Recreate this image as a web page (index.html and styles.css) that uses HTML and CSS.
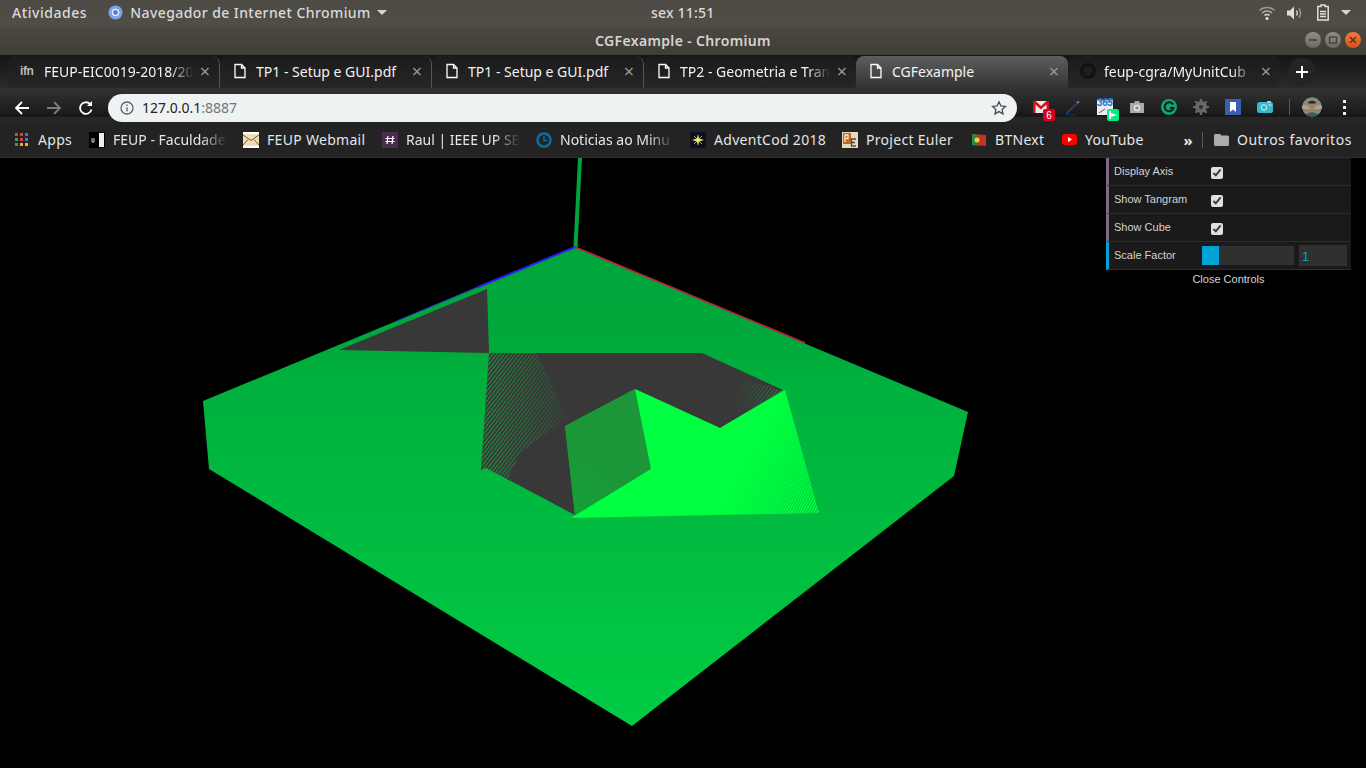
FILE: index.html
```html
<!DOCTYPE html>
<html lang="pt">
<head>
  <meta charset="UTF-8" />
  <title>CGFexample - Chromium</title>
  <link rel="stylesheet" href="styles.css">
</head>
<body>

  <div class="topbar">
    <span class="top-item activities">Atividades</span>
    <span class="top-item app">
      <svg class="chromium-icon" width="15" height="15" viewBox="0 0 16 16"><circle cx="8" cy="8" r="7.5" fill="#7da2e8"/><circle cx="8" cy="8" r="4" fill="#e8eefb"/><circle cx="8" cy="8" r="2.6" fill="#4a7fe0"/></svg>
      Navegador de Internet Chromium
      <i class="caret"></i>
    </span>
    <span class="top-item clock">sex 11:51</span>
    <span class="tray">
      <svg width="18" height="16" viewBox="0 0 18 16" fill="none" stroke="#d8d6d0" stroke-width="1.5"><path d="M1.5 5.5c4-4 11-4 15 0" opacity=".55"/><path d="M4 8c2.700-2.600 7.300-2.600 10 0" opacity=".7"/><path d="M6.500 10.500c1.300-1.200 3.700-1.200 5 0"/><circle cx="9" cy="13.500" r="1.500" fill="#e8e6e0" stroke="none"/></svg>
      <svg width="18" height="16" viewBox="0 0 18 16" fill="none" stroke="#d8d6d0" stroke-width="1.300"><path d="M1 5.500h3l4-4v13l-4-4H1z" fill="#e0ded8" stroke="none"/><path d="M10.500 5.500c1 1.500 1 3.500 0 5"/><path d="M13 3.500c2 2.500 2 6.500 0 9" opacity=".6"/></svg>
      <svg class="battery" width="14" height="17" viewBox="0 0 14 17" fill="none" stroke="#e0ded8" stroke-width="1.500"><path d="M5 1h4v1.500h3.200V16H1.800V2.500H5z"/><path d="M4 7.500h6M4 10h6M4 12.500h6" stroke-width="1.300"/></svg>
      <i class="caret"></i>
    </span>
  </div>

  <div class="titlebar">
    <span class="title">CGFexample - Chromium</span>
    <span class="win-buttons">
      <span class="win-btn"><svg width="16" height="16" viewBox="0 0 16 16"><path d="M4 8h8" stroke="#3f3d39" stroke-width="1.500"/></svg></span>
      <span class="win-btn"><svg width="16" height="16" viewBox="0 0 16 16"><rect x="4.500" y="5" width="7" height="6" fill="none" stroke="#3f3d39" stroke-width="1.200"/></svg></span>
      <span class="win-btn close"><svg width="16" height="16" viewBox="0 0 16 16"><path d="M5 5l6 6M11 5l-6 6" stroke="#5a2a12" stroke-width="1.300"/></svg></span>
    </span>
  </div>

  <div class="tabstrip">
    <div class="tab">
      <span class="favicon lab">ifn</span>
      <span class="tab-title">FEUP-EIC0019-2018/20</span>
      <span class="tab-close">×</span>
    </div>
    <div class="tab">
      <svg class="favicon" width="16" height="16" viewBox="0 0 16 16" fill="none" stroke="#fff" stroke-width="1.300"><path d="M3 1.500h6.500l3.500 3.500v9.500H3zM9.500 1.500V5H13"/></svg>
      <span class="tab-title">TP1 - Setup e GUI.pdf</span>
      <span class="tab-close">×</span>
    </div>
    <div class="tab">
      <svg class="favicon" width="16" height="16" viewBox="0 0 16 16" fill="none" stroke="#fff" stroke-width="1.300"><path d="M3 1.500h6.500l3.500 3.500v9.500H3zM9.500 1.500V5H13"/></svg>
      <span class="tab-title">TP1 - Setup e GUI.pdf</span>
      <span class="tab-close">×</span>
    </div>
    <div class="tab">
      <svg class="favicon" width="16" height="16" viewBox="0 0 16 16" fill="none" stroke="#fff" stroke-width="1.300"><path d="M3 1.500h6.500l3.500 3.500v9.500H3zM9.500 1.500V5H13"/></svg>
      <span class="tab-title">TP2 - Geometria e Tran</span>
      <span class="tab-close">×</span>
    </div>
    <div class="tab active">
      <svg class="favicon" width="16" height="16" viewBox="0 0 16 16" fill="none" stroke="#fff" stroke-width="1.300"><path d="M3 1.500h6.500l3.500 3.500v9.500H3zM9.500 1.500V5H13"/></svg>
      <span class="tab-title">CGFexample</span>
      <span class="tab-close">×</span>
    </div>
    <div class="tab">
      <svg class="favicon" width="16" height="16" viewBox="0 0 16 16"><circle cx="8" cy="8" r="8" fill="#111"/><path d="M4.500 13.500v-1.500c-2 .3-2.300-1-3-1.500M8 14v-2.500c2.500-.3 3.800-1.500 3.800-3.700 0-.9-.3-1.600-.8-2.100.2-.6.100-1.300-.1-1.900-.7 0-1.300.3-1.800.7a6 6 0 0 0-2.200 0c-.5-.4-1.100-.7-1.800-.7-.2.600-.3 1.300-.1 1.900-.5.500-.8 1.200-.8 2.100 0 2.200 1.300 3.400 3.800 3.700" fill="#1d1d1d" stroke="#2a2a2a" stroke-width=".8"/></svg>
      <span class="tab-title">feup-cgra/MyUnitCub</span>
      <span class="tab-close">×</span>
    </div>
    <span class="newtab"><svg width="14" height="14" viewBox="0 0 14 14"><path d="M7 1v12M1 7h12" stroke="#fff" stroke-width="2"/></svg></span>
  </div>

  <div class="toolbar">
    <span class="nav-btn"><svg width="16" height="16" viewBox="0 0 16 16" fill="none" stroke="#fff" stroke-width="1.800"><path d="M15 8H2M8 2L2 8l6 6"/></svg></span>
    <span class="nav-btn off"><svg width="16" height="16" viewBox="0 0 16 16" fill="none" stroke="#7b7b7b" stroke-width="1.800"><path d="M1 8h13M8 2l6 6-6 6"/></svg></span>
    <span class="nav-btn"><svg width="16" height="16" viewBox="0 0 16 16" fill="none" stroke="#fff" stroke-width="1.800"><path d="M13.500 9.500A5.800 5.800 0 1 1 12 4"/><path d="M14 1v5H9" fill="#fff" stroke="none"/></svg></span>
    <div class="urlbar">
      <svg class="info" width="14" height="14" viewBox="0 0 14 14" fill="none" stroke="#5f6368" stroke-width="1.300"><circle cx="7" cy="7" r="6"/><path d="M7 6.200V10.500M7 3.500v1.500"/></svg>
      <span class="url-text"><span class="host">127.0.0.1</span><span class="port">:8887</span></span>
      <svg class="star" width="16" height="16" viewBox="0 0 16 16" fill="none" stroke="#4a4d50" stroke-width="1.300"><path d="M8 1.800l1.900 4.100 4.500.5-3.300 3 .9 4.500L8 11.600l-4 2.300.9-4.500-3.300-3 4.500-.5z"/></svg>
    </div>
    <div class="extensions">
      <span class="ext">
        <svg width="16" height="14" viewBox="0 0 16 14"><rect width="16" height="12" y="1" fill="#e8e8e8"/><path d="M0 1h2.500L8 6l5.500-5H16v12h-2.500V4.500L8 9.500 2.500 4.500V13H0z" fill="#d8101c"/></svg>
        <b class="badge red">6</b>
      </span>
      <span class="ext">
        <svg width="18" height="18" viewBox="0 0 18 18"><path d="M3 13.500L14 3l1.500 1L5 15z" fill="#2c3a58"/><path d="M12.500 4.500L14 3l1.500 1L14 5.500z" fill="#8a94a8"/><path d="M3 13.500L5 15l-3.500 1.500z" fill="#1038c0"/><path d="M2 16.800h11" stroke="#14305c" stroke-width="1.200"/></svg>
      </span>
      <span class="ext">
        <svg width="16" height="16" viewBox="0 0 16 16"><rect width="16" height="16" fill="#e8eef4"/><rect width="16" height="1.500" fill="#2a70c0"/><path d="M2 14l6-4" stroke="#7a8a9a" stroke-width="1.500"/></svg>
        <span class="ext-365">365</span>
        <b class="badge green"><svg width="10" height="8" viewBox="0 0 10 8"><path d="M1 0h2v2l6 2-6 2v2H1z" fill="#fff"/></svg></b>
      </span>
      <span class="ext">
        <svg width="16" height="14" viewBox="0 0 16 14"><path d="M1 3h4l1-2h4l1 2h4v10H1z" fill="#a9a9a9"/><circle cx="8" cy="8" r="3.200" fill="#e6e6e6"/><circle cx="8" cy="8" r="1.800" fill="#8c8c8c"/></svg>
      </span>
      <span class="ext">
        <svg width="16" height="16" viewBox="0 0 16 16"><circle cx="8" cy="8" r="8" fill="#12a36e"/><path d="M12 5.500A4.500 4.500 0 1 0 12.500 9H9" fill="none" stroke="#0d1f18" stroke-width="2"/></svg>
      </span>
      <span class="ext">
        <svg width="16" height="16" viewBox="0 0 16 16"><circle cx="8" cy="8" r="6" fill="#686868"/><path d="M8 0v3M8 13v3M0 8h3M13 8h3M2.300 2.300l2 2M11.700 11.700l2 2M13.700 2.300l-2 2M4.300 11.700l-2 2" stroke="#686868" stroke-width="2.200"/><circle cx="8" cy="8" r="2" fill="#2c2c2c"/></svg>
      </span>
      <span class="ext">
        <svg width="16" height="16" viewBox="0 0 16 16"><rect width="16" height="16" fill="#3b5fb0"/><path d="M5 3h6v10l-3-2.500L5 13z" fill="#fff"/></svg>
      </span>
      <span class="ext">
        <svg width="16" height="12" viewBox="0 0 16 12"><rect y="1" width="16" height="11" rx="2.500" fill="#35b8c8"/><rect x="10" width="4" height="2" fill="#8ad8e0"/><circle cx="7" cy="6.500" r="2.800" fill="none" stroke="#d8f4f8" stroke-width="1"/><path d="M11.500 4h3" stroke="#d8f4f8"/></svg>
      </span>
      <i class="tool-sep"></i>
      <span class="avatar"><svg width="20" height="20" viewBox="0 0 20 20"><circle cx="10" cy="10" r="10" fill="#8a8878"/><path d="M0 8h20v4H0z" fill="#a8a490"/><circle cx="10" cy="8" r="3.800" fill="#a87a60"/><path d="M6 6c1-3 7-3 8 0l-1 .5H7z" fill="#2a2420"/><path d="M3 20c0-6 14-6 14 0z" fill="#3a5868"/></svg></span>
      <span class="ext menu"><i></i><i></i><i></i></span>
    </div>
  </div>

  <div class="bookmarks">
    <span class="bm apps">
      <svg width="13" height="13" viewBox="0 0 13 13"><g fill="#e04030"><rect width="3" height="3"/><rect x="5" width="3" height="3"/><rect x="10" width="3" height="3" fill="#3a78e0"/></g><g fill="#38a050"><rect y="5" width="3" height="3"/><rect x="5" y="5" width="3" height="3" fill="#e04030"/><rect x="10" y="5" width="3" height="3" fill="#3a78e0"/><rect y="10" width="3" height="3"/><rect x="5" y="10" width="3" height="3" fill="#f0b020"/><rect x="10" y="10" width="3" height="3" fill="#f0b020"/></g></svg>
      <span class="bm-name">Apps</span>
    </span>
    <span class="bm">
      <svg width="16" height="16" viewBox="0 0 16 16"><rect width="16" height="16"/><rect x="10" y="1" width="5" height="14" fill="#eee"/><path d="M3 6v4h2V6" fill="none" stroke="#ddd"/></svg>
      <span class="bm-name fade">FEUP - Faculdade</span>
    </span>
    <span class="bm">
      <svg width="16" height="16" viewBox="0 0 16 16"><rect width="16" height="2" fill="#fff"/><rect y="14" width="16" height="2" fill="#fff"/><rect y="2" width="16" height="12" fill="#f0dfb8"/><path d="M0 3l8 5.500L16 3M0 13l5-5.500M16 13l-5-5.500" fill="none" stroke="#7a5a30"/></svg>
      <span class="bm-name">FEUP Webmail</span>
    </span>
    <span class="bm">
      <svg width="16" height="16" viewBox="0 0 16 16"><rect width="16" height="16" fill="#4a2d4e"/><path d="M6 4L5 12M11 4l-1 8M3.500 6.500h9M3.500 9.500h9" stroke="#fff" stroke-width="1.200"/></svg>
      <span class="bm-name fade">Raul | IEEE UP SB</span>
    </span>
    <span class="bm">
      <svg width="16" height="16" viewBox="0 0 16 16" fill="none"><circle cx="8" cy="8" r="6.500" stroke="#0a6ea8" stroke-width="2.500"/><path d="M8 4v4.500h3.500" stroke="#0a6ea8" stroke-width="1.500"/></svg>
      <span class="bm-name fade">Noticias ao Minu</span>
    </span>
    <span class="bm">
      <svg width="16" height="16" viewBox="0 0 16 16"><rect width="16" height="16" fill="#0f0f23"/><path d="M8 2l1.100 4.400L14 8l-4.900 1.600L8 14 6.900 9.600 2 8l4.900-1.600z" fill="#e8e860"/><path d="M4 4l8 8M12 4l-8 8" stroke="#e8e860" stroke-width=".7"/></svg>
      <span class="bm-name">AdventCod 2018</span>
    </span>
    <span class="bm">
      <svg width="16" height="16" viewBox="0 0 16 16"><rect width="16" height="16" fill="#e8d8c0"/><rect x="1" y="1" width="8" height="11" fill="#c86818"/><path d="M3 10V3h3v3.500H3" fill="none" stroke="#f4e8d8" stroke-width="1.300"/><path d="M14 7H9.500v7H14M9.500 10.500H13" fill="none" stroke="#4a4a4a" stroke-width="1.300"/></svg>
      <span class="bm-name">Project Euler</span>
    </span>
    <span class="bm">
      <svg width="16" height="16" viewBox="0 0 16 16"><path d="M1 2l14 1v11L1 13z" fill="#c8302c"/><path d="M1 2l5 .4v11L1 13z" fill="#2a8a3c"/><circle cx="6" cy="8" r="2.500" fill="#e8d040"/></svg>
      <span class="bm-name">BTNext</span>
    </span>
    <span class="bm">
      <svg width="15" height="11" viewBox="0 0 15 11"><rect width="15" height="11" rx="3" fill="#f00"/><path d="M6 3l4 2.500L6 8z" fill="#fff"/></svg>
      <span class="bm-name">YouTube</span>
    </span>
    <span class="bm-more">»</span>
    <i class="bm-sep"></i>
    <span class="bm">
      <svg width="15" height="12" viewBox="0 0 15 12"><path d="M0 1.500C0 .700.700 0 1.500 0H6l1.500 1.500h6c.800 0 1.500.700 1.500 1.500v7.500c0 .800-.700 1.500-1.500 1.500h-12C.700 12 0 11.300 0 10.500z" fill="#a9adb0"/></svg>
      <span class="bm-name outros">Outros favoritos</span>
    </span>
  </div>

  <div class="scene">
    <svg class="webgl" width="1366" height="610" viewBox="0 158 1366 610">
      <defs>
        <linearGradient id="floor" gradientUnits="userSpaceOnUse" x1="0" y1="247" x2="0" y2="726">
          <stop offset="0" stop-color="#00a53b"/>
          <stop offset=".2" stop-color="#00a93c"/>
          <stop offset=".27" stop-color="#00b03d"/>
          <stop offset=".6" stop-color="#00bc40"/>
          <stop offset="1" stop-color="#00cc44"/>
        </linearGradient>
        <pattern id="stripes" patternUnits="userSpaceOnUse" width="3" height="3" patternTransform="rotate(-52)">
          <rect width="3" height="1" fill="#1c9a3c"/>
        </pattern>
        <pattern id="stripes-light" patternUnits="userSpaceOnUse" width="2.500" height="2.500" patternTransform="rotate(-62)">
          <rect width="2.500" height="1" fill="#00bc3e"/>
        </pattern>
        <linearGradient id="fade-left" gradientUnits="userSpaceOnUse" x1="485" y1="0" x2="585" y2="0">
          <stop offset="0" stop-color="#fff"/>
          <stop offset="1" stop-color="#000"/>
        </linearGradient>
        <linearGradient id="fade-right" gradientUnits="userSpaceOnUse" x1="782" y1="0" x2="735" y2="0">
          <stop offset="0" stop-color="#ccc"/>
          <stop offset="1" stop-color="#000"/>
        </linearGradient>
        <linearGradient id="fade-corner" gradientUnits="userSpaceOnUse" x1="819" y1="513" x2="741" y2="471">
          <stop offset="0" stop-color="#fff"/>
          <stop offset="1" stop-color="#000"/>
        </linearGradient>
        <linearGradient id="fade-cube" gradientUnits="userSpaceOnUse" x1="570" y1="510" x2="605" y2="460">
          <stop offset="0" stop-color="#aaa"/>
          <stop offset="1" stop-color="#000"/>
        </linearGradient>
        <mask id="mask-left" maskUnits="userSpaceOnUse" x="470" y="340" width="120" height="150"><rect x="470" y="340" width="120" height="150" fill="url(#fade-left)"/></mask>
        <mask id="mask-right" maskUnits="userSpaceOnUse" x="730" y="370" width="60" height="50"><rect x="730" y="370" width="60" height="50" fill="url(#fade-right)"/></mask>
        <mask id="mask-corner" maskUnits="userSpaceOnUse" x="700" y="380" width="130" height="140"><rect x="700" y="380" width="130" height="140" fill="url(#fade-corner)"/></mask>
        <mask id="mask-cube" maskUnits="userSpaceOnUse" x="560" y="420" width="95" height="100"><rect x="560" y="420" width="95" height="100" fill="url(#fade-cube)"/></mask>
      </defs>

      <polygon points="575,247 968,412 954,476 632,726 209,469 203,401" fill="url(#floor)"/>
      <polygon points="339,350 487,289 489,353" fill="#383838"/>
      <polygon points="489,353 702,353 783,390 720,428 635,389 565,426 575,515 486,468 481,470" fill="#383838"/>
      <polygon points="489,353 537,353 567,417 520,453 507,480 486,468 481,470" fill="url(#stripes)" mask="url(#mask-left)"/>
      <polygon points="733,377 782,391 735,417" fill="url(#stripes)" mask="url(#mask-right)"/>
      <polygon points="635,389 565,426 575,515 651,469" fill="#1c9638"/>
      <polygon points="635,389 565,426 575,515 651,469" fill="url(#stripes-light)" mask="url(#mask-cube)"/>
      <polygon points="635,389 651,469 571,518 819,513 785,390 720,428" fill="#00ff40"/>
      <polygon points="819,513 785,390 717,515" fill="url(#stripes-light)" mask="url(#mask-corner)"/>

      <line x1="575.500" y1="247" x2="580" y2="158" stroke="#00a53b" stroke-width="4"/>
      <line x1="575" y1="247" x2="805" y2="343" stroke="#b02a3c" stroke-width="1.800"/>
      <line x1="575" y1="247" x2="478" y2="287" stroke="#2a1cf0" stroke-width="2"/>
      <line x1="478" y1="287" x2="397" y2="321" stroke="#2048c0" stroke-width="1.200"/>
    </svg>

    <div class="gui">
      <div class="gui-row">
        <label class="gui-label">Display Axis</label>
        <input class="gui-check" type="checkbox" checked />
      </div>
      <div class="gui-row">
        <label class="gui-label">Show Tangram</label>
        <input class="gui-check" type="checkbox" checked />
      </div>
      <div class="gui-row">
        <label class="gui-label">Show Cube</label>
        <input class="gui-check" type="checkbox" checked />
      </div>
      <div class="gui-row number">
        <label class="gui-label">Scale Factor</label>
        <div class="gui-slider"><div class="gui-fill"></div></div>
        <input class="gui-value" type="text" value="1" />
      </div>
      <div class="gui-close">Close Controls</div>
    </div>
  </div>

</body>
</html>
```

FILE: styles.css
```css
* {
  box-sizing: border-box;
}
html, body {
  height: 100%;
}
body {
  margin: 0;
  width: 1366px;
  height: 768px;
  overflow: hidden;
  display: flex;
  flex-direction: column;
  background: #000;
  font-family: "Noto Sans", sans-serif;
}

/* ubuntu top bar */
.topbar {
  height: 27px;
  flex: none;
  position: relative;
  display: flex;
  align-items: center;
  padding: 0 0 2px 12px;
  background: linear-gradient(to bottom, #4d4a44, #514e48);
  color: #d8dadb;
  font-size: 14px;
  font-weight: 500;
  letter-spacing: .55px;
}
.top-item {
  display: flex;
  align-items: center;
  white-space: nowrap;
}
.app {
  margin-left: 21px;
  gap: 7px;
  letter-spacing: .42px;
}
.clock {
  position: absolute;
  left: 651px;
  top: 3px;
  letter-spacing: .2px;
}
.caret {
  display: inline-block;
  width: 0;
  height: 0;
  border: 5px solid transparent;
  border-top: 5px solid #d8d6d0;
  border-bottom: 0;
  margin-left: -1px;
}
.tray {
  margin-left: auto;
  padding-right: 15px;
  display: flex;
  align-items: center;
  gap: 9px;
}
.tray svg:first-child {
  margin-right: 1px;
}
.tray .caret {
  margin-left: 2px;
}
.battery {
  margin-left: 3px;
}

.titlebar {
  height: 28px;
  flex: none;
  position: relative;
  display: flex;
  align-items: center;
  justify-content: center;
  padding-bottom: 2px;
  background: linear-gradient(to bottom, #4b4842, #403d38);
  color: #d6d4ce;
  font-size: 14px;
  font-weight: 600;
  letter-spacing: .35px;
}
.win-buttons {
  position: absolute;
  right: 5px;
  top: 5px;
  display: flex;
  gap: 4px;
}
.win-btn {
  width: 16px;
  height: 16px;
  border-radius: 50%;
  background: linear-gradient(to bottom, #8f8c85, #6c6963);
  display: block;
}
.win-btn svg {
  display: block;
}
.win-btn.close {
  background: linear-gradient(to bottom, #f2793f, #d8501c);
}

/* chromium */
.tabstrip {
  height: 33px;
  flex: none;
  display: flex;
  align-items: stretch;
  padding: 1px 0 0 8px;
  background: linear-gradient(to bottom, #141414, #2b2b2b);
}
.tab {
  width: 212px;
  position: relative;
  display: flex;
  align-items: center;
  padding: 0 7px 2px 12px;
  border-radius: 8px 8px 0 0;
  background: linear-gradient(to bottom, #1b1b1b, #262626);
  color: #f2f2f2;
  font-size: 14px;
  border-right: 1px solid #555;
  background-clip: padding-box;
}
.tab:nth-child(4), .tab:nth-child(6) {
  border-right: 0;
  border-radius: 8px 8px 8px 0;
}
.tab.active {
  background: linear-gradient(to bottom, #5e5e5e, #333);
  border-right: 0;
  z-index: 1;
}
.favicon {
  flex: none;
  width: 16px;
  margin-right: 8px;
}
.lab {
  color: #bbb;
  font-size: 12px;
  font-weight: 700;
  letter-spacing: -.4px;
  font-family: "Liberation Sans", sans-serif;
}
.tab-title {
  flex: 1;
  min-width: 0;
  white-space: nowrap;
  -webkit-mask-image: linear-gradient(to left, transparent 0, #000 24px);
  mask-image: linear-gradient(to left, transparent 0, #000 24px);
}
.tab:nth-child(2) .tab-title, .tab:nth-child(3) .tab-title, .tab.active .tab-title {
  -webkit-mask-image: none;
  mask-image: none;
}
.tab-close {
  flex: none;
  width: 14px;
  margin-left: 4px;
  text-align: center;
  color: #999;
  font-size: 18px;
  line-height: 18px;
}
.newtab {
  width: 28px;
  height: 28px;
  margin: 2px 0 0 8px;
  border-radius: 50%;
  background: #242424;
  display: flex;
  align-items: center;
  justify-content: center;
}

.toolbar {
  height: 34px;
  flex: none;
  display: flex;
  align-items: flex-start;
  padding: 6px 0 0 6px;
  background: linear-gradient(to bottom, #333 0, #191919 27px, #111 28px, #262626 29px);
  position: relative;
  z-index: 2;
}
.nav-btn {
  width: 32px;
  height: 28px;
  display: flex;
  align-items: center;
  justify-content: center;
}
.urlbar {
  width: 909px;
  height: 28px;
  margin-left: 6px;
  border-radius: 14px;
  background: #eff2f3;
  display: flex;
  align-items: center;
  padding: 0 10px 0 12px;
  font-size: 14px;
}
.info {
  margin-right: 8px;
  flex: none;
}
.url-text {
  padding-bottom: 2px;
}
.host {
  color: #202124;
}
.port {
  color: #70757a;
}
.star {
  margin-left: auto;
}
.extensions {
  display: flex;
  align-items: center;
  height: 26px;
  margin-left: 8px;
}
.ext {
  width: 32px;
  height: 26px;
  position: relative;
  display: flex;
  align-items: center;
  justify-content: center;
}
.ext-365 {
  position: absolute;
  left: 8px;
  top: 3px;
  color: #2a70c0;
  font: italic 700 10px "Liberation Sans", sans-serif;
  letter-spacing: -.4px;
}
.badge {
  position: absolute;
  left: 18px;
  top: 15px;
  width: 12px;
  height: 12px;
  border-radius: 2px;
  display: flex;
  align-items: center;
  justify-content: center;
  color: #fff;
  font: 400 10px "Liberation Sans", sans-serif;
}
.badge.red {
  background: #d4001c;
}
.badge.green {
  background: #00f080;
}
.tool-sep {
  width: 1px;
  height: 16px;
  background: #5a5a5a;
  margin: 0 12px 0 8px;
}
.avatar {
  width: 20px;
  height: 20px;
  border-radius: 50%;
  overflow: hidden;
  margin-right: 6px;
}
.avatar svg {
  display: block;
}
.menu {
  flex-direction: column;
  gap: 3px;
}
.menu i {
  width: 3px;
  height: 3px;
  background: #f0f0f0;
}

.bookmarks {
  height: 36px;
  flex: none;
  display: grid;
  grid-template-columns: 74px 154px 139px 154px 154px 152px 129px 91px 126px 14px 12px auto;
  align-items: center;
  padding-left: 15px;
  background: #232323;
  color: #e3e6e8;
  font-size: 14px;
  letter-spacing: .3px;
  border-bottom: 1px solid #2f2f2f;
}
.bm {
  display: flex;
  align-items: center;
  gap: 8px;
  min-width: 0;
  white-space: nowrap;
}
.bm.apps {
  gap: 10px;
}
.bm svg {
  flex: none;
}
.bm-name {
  min-width: 0;
}
.bm-name.outros {
  letter-spacing: .5px;
}
.fade {
  width: 114px;
  flex: none;
  letter-spacing: 0;
  -webkit-mask-image: linear-gradient(to left, transparent 0, #000 26px);
  mask-image: linear-gradient(to left, transparent 0, #000 26px);
}
.bm-more {
  justify-self: end;
  padding-right: 9px;
  font-size: 15px;
  font-weight: 700;
}
.bm-sep {
  width: 1px;
  height: 16px;
  background: #5a5a5a;
}

/* canvas and dat.gui */
.scene {
  flex: 1;
  position: relative;
  background: #000;
  overflow: hidden;
}
.webgl {
  display: block;
}
.gui {
  position: absolute;
  left: 1106px;
  top: 0;
  width: 245px;
  font: 11px "Liberation Sans", sans-serif;
  color: #eee;
}
.gui-row {
  height: 28px;
  display: flex;
  align-items: center;
  background: #1a1a1a;
  border-left: 3px solid #806787;
  border-bottom: 1px solid #2c2c2c;
  padding-right: 4px;
}
.gui-row.number {
  border-left-color: #00a2d8;
}
.gui-label {
  width: 93px;
  flex: none;
  padding: 0 0 1px 5px;
  color: #d4d4d4;
}
.gui-check {
  width: 12px;
  height: 12px;
  margin: 3px 0 0 9px;
  accent-color: #e0e0e0;
}
.gui-slider {
  width: 92px;
  height: 19px;
  background: #303030;
  margin-bottom: 1px;
}
.gui-fill {
  width: 17px;
  height: 100%;
  background: #00a2d8;
}
.gui-value {
  width: 48px;
  height: 21px;
  margin-left: 5px;
  padding: 2px 0 0 3px;
  border: 0;
  background: #303030;
  color: #00a2d8;
  font: 13px "Liberation Sans", sans-serif;
}
.gui-close {
  height: 20px;
  line-height: 19px;
  text-align: center;
  color: #d4d4d4;
}
```
